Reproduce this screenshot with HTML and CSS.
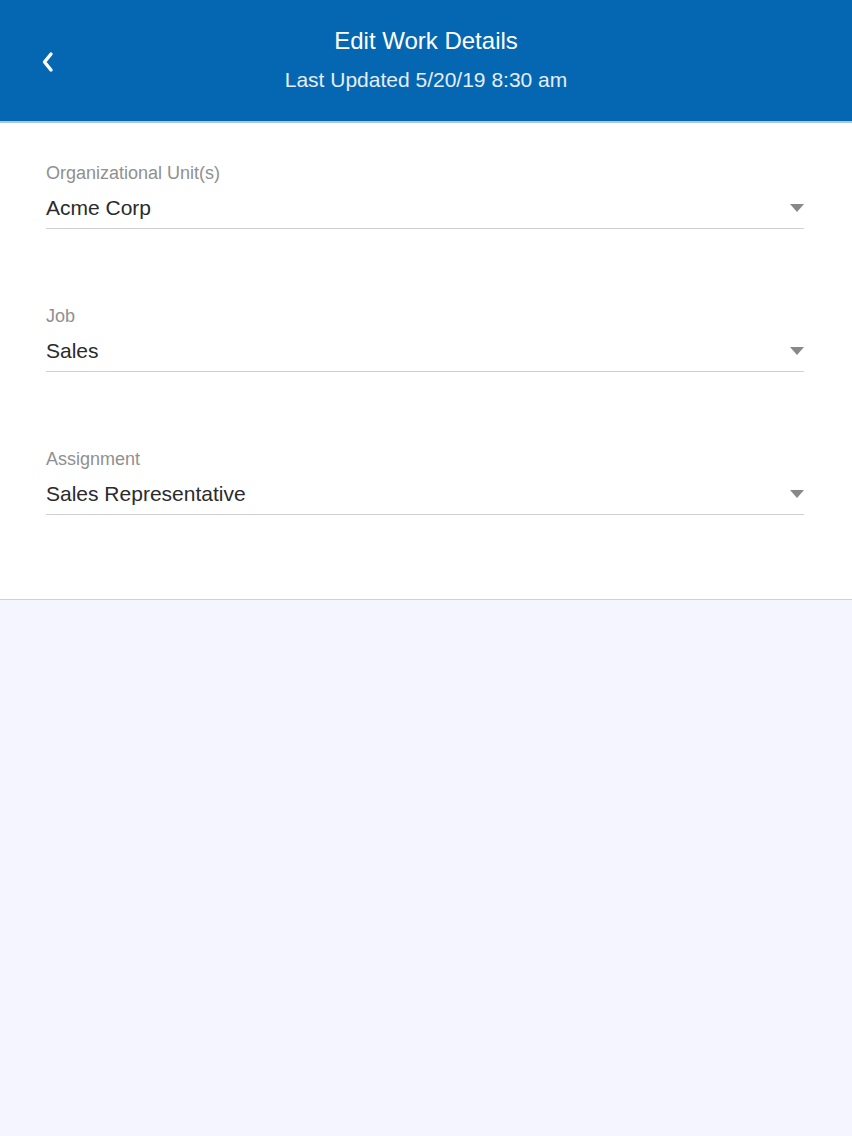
FILE: index.html
```html
<!DOCTYPE html>
<html>
<head>
<meta charset="utf-8">
<link rel="stylesheet" href="styles.css">
</head>
<body>
<header class="header">
  <button class="back" aria-label="Back">
    <svg width="14" height="22" viewBox="0 0 14 22"><path d="M11 3 L4.5 11 L11 19" fill="none" stroke="#fff" stroke-width="3.4" stroke-linecap="round" stroke-linejoin="round"/></svg>
  </button>
  <div class="title">Edit Work Details</div>
  <div class="subtitle">Last Updated 5/20/19 8:30 am</div>
</header>
<main class="panel">
  <div class="field">
    <div class="label">Organizational Unit(s)</div>
    <div class="select"><span class="value">Acme Corp</span><span class="caret"></span></div>
  </div>
  <div class="field">
    <div class="label">Job</div>
    <div class="select"><span class="value">Sales</span><span class="caret"></span></div>
  </div>
  <div class="field">
    <div class="label">Assignment</div>
    <div class="select"><span class="value">Sales Representative</span><span class="caret"></span></div>
  </div>
</main>
</body>
</html>
```
FILE: styles.css
```css
html, body {
  margin: 0;
  padding: 0;
}
body {
  background: #f4f5fe;
  font-family: "Liberation Sans", Arial, sans-serif;
  min-height: 1136px;
}
.header {
  position: relative;
  height: 121px;
  background: #0567b1;
  border-bottom: 2px solid #a9c7e3;
  box-sizing: content-box;
  display: flex;
  flex-direction: column;
  align-items: center;
  color: #fff;
}
.back {
  position: absolute;
  left: 40px;
  top: 51px;
  background: none;
  border: 0;
  padding: 0;
  width: 14px;
  height: 22px;
}
.title {
  margin-top: 27px;
  font-size: 24px;
  line-height: 28px;
}
.subtitle {
  margin-top: 13px;
  font-size: 21px;
  line-height: 24px;
  color: #e4eef8;
}
.panel {
  background: #fff;
  border-bottom: 1px solid #cfd3d8;
  padding: 40px 48px 0 46px;
  height: 436px;
  display: flex;
  flex-direction: column;
  gap: 77px;
}
.field {
  display: flex;
  flex-direction: column;
}
.label {
  font-size: 18px;
  line-height: 20px;
  color: #909090;
}
.select {
  display: flex;
  align-items: center;
  justify-content: space-between;
  height: 41px;
  border-bottom: 1px solid #cfcfcf;
  margin-top: 4px;
}
.value {
  font-size: 21px;
  color: #2b2b2b;
}
.caret {
  width: 0;
  height: 0;
  border-left: 7px solid transparent;
  border-right: 7px solid transparent;
  border-top: 8px solid #888;
}
```
